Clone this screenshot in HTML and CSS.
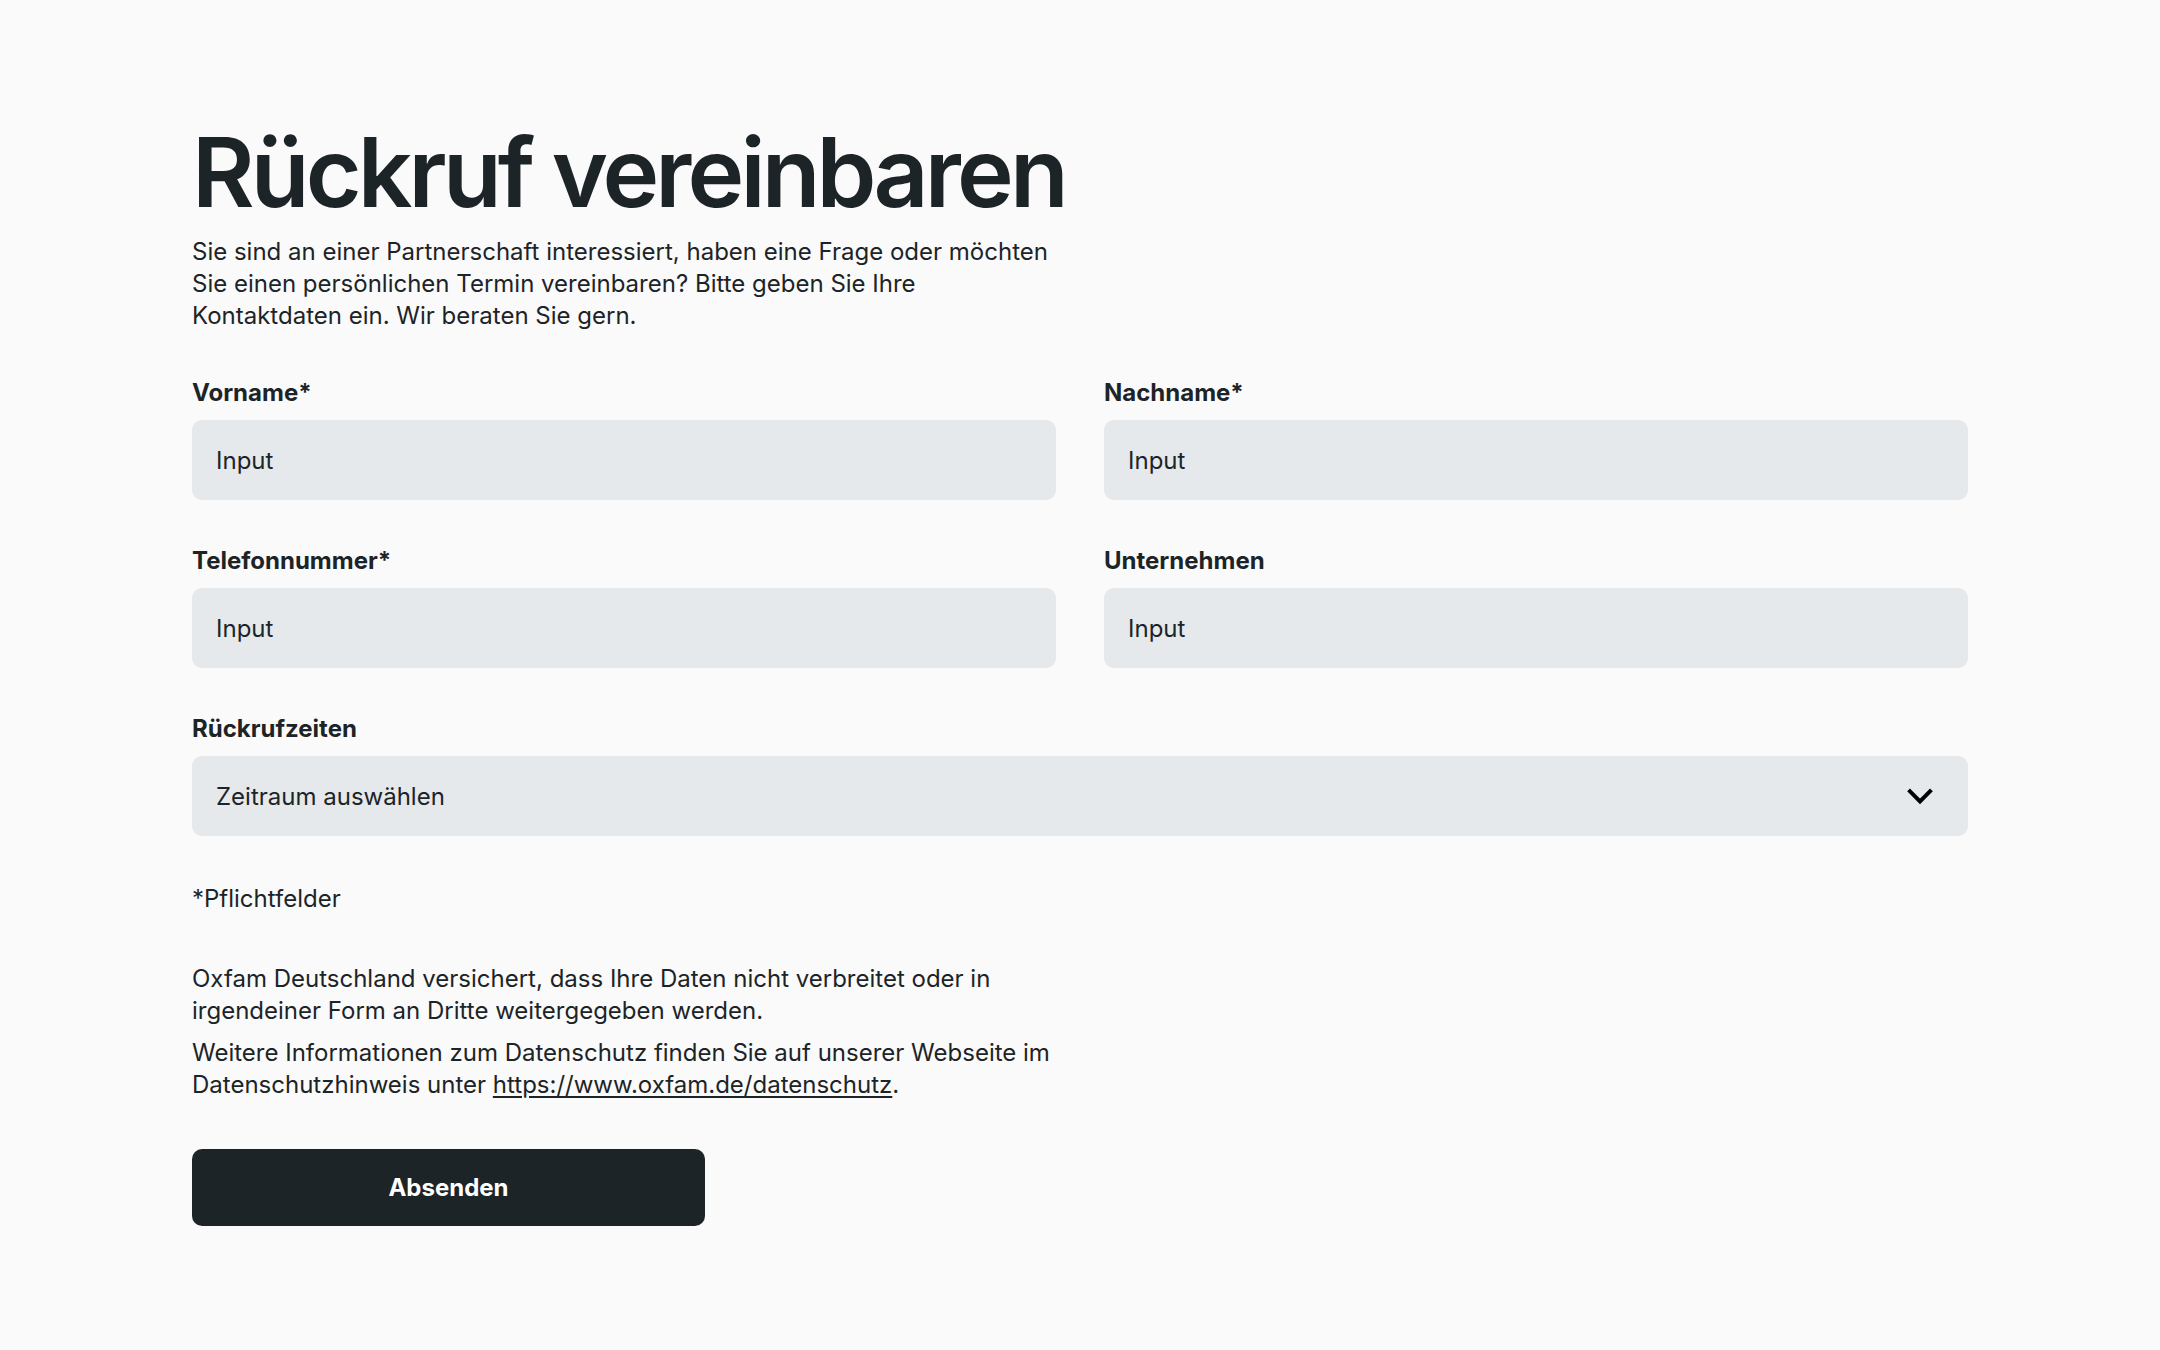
FILE: index.html
```html
<!DOCTYPE html>
<html lang="de">
<head>
    <meta charset="UTF-8">
    <meta name="viewport" content="width=device-width, initial-scale=1.0">
    <title>Rückruf vereinbaren</title>
    <link rel="stylesheet" href="styles.css">
</head>
<body>
    <main class="page">
        <h1 class="title">Rückruf vereinbaren</h1>
        <p class="intro">Sie sind an einer Partnerschaft interessiert, haben eine Frage oder möchten Sie einen persönlichen Termin vereinbaren? Bitte geben Sie Ihre Kontaktdaten ein. Wir beraten Sie gern.</p>

        <form class="callback-form">
            <div class="fields">
                <div class="field">
                    <label class="label" for="vorname">Vorname*</label>
                    <input class="input" id="vorname" type="text" placeholder="Input">
                </div>
                <div class="field">
                    <label class="label" for="nachname">Nachname*</label>
                    <input class="input" id="nachname" type="text" placeholder="Input">
                </div>
                <div class="field">
                    <label class="label" for="telefon">Telefonnummer*</label>
                    <input class="input" id="telefon" type="tel" placeholder="Input">
                </div>
                <div class="field">
                    <label class="label" for="firma">Unternehmen</label>
                    <input class="input" id="firma" type="text" placeholder="Input">
                </div>
                <div class="field field-wide">
                    <label class="label" for="zeiten">Rückrufzeiten</label>
                    <div class="select-wrap">
                        <select class="input select" id="zeiten">
                            <option>Zeitraum auswählen</option>
                            <option>Vormittags (9 - 12 Uhr)</option>
                            <option>Mittags (12 - 14 Uhr)</option>
                            <option>Nachmittags (14 - 17 Uhr)</option>
                        </select>
                        <svg class="chevron" width="32" height="32" viewBox="0 0 24 24" fill="none">
                            <path d="M4.5 8.5 L12 16 L19.5 8.5" stroke="#000" stroke-width="3" stroke-linecap="square"/>
                        </svg>
                    </div>
                </div>
            </div>

            <p class="required">*Pflichtfelder</p>

            <div class="privacy">
                <p>Oxfam Deutschland versichert, dass Ihre Daten nicht verbreitet oder in irgendeiner Form an Dritte weitergegeben werden.</p>
                <p>Weitere Informationen zum Datenschutz finden Sie auf unserer Webseite im Datenschutzhinweis unter <a href="#">https://www.oxfam.de/datenschutz</a>.</p>
            </div>

            <button class="submit" type="submit">Absenden</button>
        </form>
    </main>
</body>
</html>
```

FILE: styles.css
```css
body {
    margin: 0;
    background-color: #FAFAFA;
    color: #1D2427;
    font-family: Inter, "Noto Sans", sans-serif;
    font-size: 24px;
    line-height: 32px;
}
.page {
    width: 1776px;
    margin: 0 auto;
    padding: 124px 0 100px;
}
.title {
    margin: 0;
    font-size: 96px;
    line-height: 96px;
    font-weight: 600;
    letter-spacing: -0.04em;
}
.intro {
    max-width: 864px;
    margin: 16px 0 0;
}
.callback-form {
    margin-top: 45px;
}
.fields {
    display: grid;
    grid-template-columns: 1fr 1fr;
    column-gap: 48px;
    row-gap: 45px;
}
.field-wide {
    grid-column: span 2;
}
.label {
    display: block;
    font-weight: 700;
    margin-bottom: 11px;
}
.input {
    display: block;
    box-sizing: border-box;
    width: 100%;
    height: 80px;
    padding: 0 24px;
    border: none;
    border-radius: 10px;
    background-color: #E5E9EC;
    color: #1D2427;
    font-family: inherit;
    font-size: 24px;
}
.input::placeholder {
    color: #1D2427;
    opacity: 1;
}
.select-wrap {
    position: relative;
}
.select {
    appearance: none;
    -webkit-appearance: none;
    cursor: pointer;
}
.chevron {
    position: absolute;
    right: 32px;
    top: 24px;
    pointer-events: none;
}
.required {
    margin: 47px 0 0;
}
.privacy {
    margin-top: 48px;
    max-width: 864px;
}
.privacy p {
    margin: 0 0 10px;
}
.privacy a {
    color: inherit;
    text-decoration: underline;
    text-underline-offset: 3px;
}
.submit {
    display: block;
    width: 513px;
    height: 77px;
    margin-top: 48px;
    border: none;
    border-radius: 10px;
    background-color: #1D2427;
    color: #FFFFFF;
    font-family: inherit;
    font-size: 24px;
    font-weight: 700;
    cursor: pointer;
}
```
